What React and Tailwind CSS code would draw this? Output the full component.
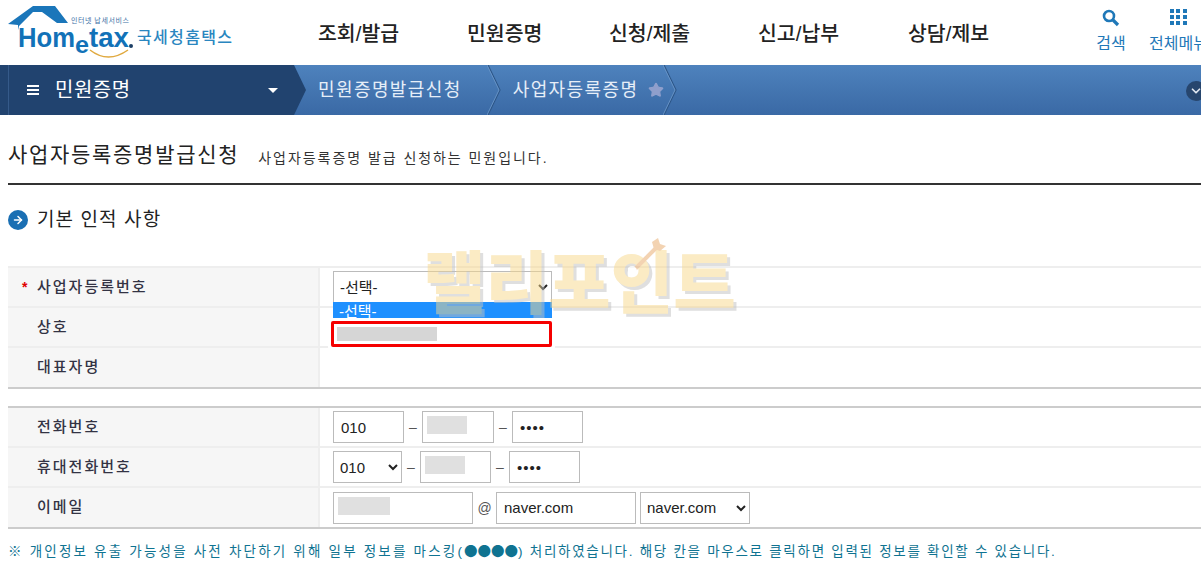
import React from "react";
import { Star, ChevronDown, ArrowRight } from "lucide-react";

const KR = "font-['Liberation_Sans','Noto_Sans_CJK_KR',sans-serif]";

const menus = [
    { label: "조회/발급", w: "w-[149px]" },
    { label: "민원증명", w: "w-[142px]" },
    { label: "신청/제출", w: "w-[149px]" },
    { label: "신고/납부", w: "w-[150px]" },
    { label: "상담/제보", w: "w-[120px]" },
];

const Logo = () => (
    <svg width="232" height="65" viewBox="0 0 232 65" className="shrink-0">
        <path d="M8 24 L33 6 L55 6 L68 23 L57 23 L42 12 L33 12 L19 26 L18 30 L18 25 Z" fill="#1a76ba" />
        <text x="71" y="23" fontSize="7" fill="#3d6fa6" fontFamily="Noto Sans CJK KR" textLength="58">인터넷 납세서비스</text>
        <text x="18" y="47" fontSize="28" fontWeight="700" fill="#1272b8" fontFamily="Liberation Sans" textLength="57" lengthAdjust="spacingAndGlyphs">Hom</text>
        <text x="75" y="53" fontSize="24" fontWeight="700" fill="#1272b8" fontFamily="Liberation Sans" textLength="14" lengthAdjust="spacingAndGlyphs">e</text>
        <text x="89" y="47" fontSize="27" fontWeight="700" fill="#1272b8" fontFamily="Liberation Sans" textLength="40" lengthAdjust="spacingAndGlyphs">tax</text>
        <circle cx="131" cy="46" r="2" fill="#1d3f66" />
        <path d="M90 50 Q108 64 128 50" fill="none" stroke="#e0a93f" strokeWidth="1.5" />
        <text x="137" y="43" fontSize="16" fontWeight="500" fill="#2a86c0" fontFamily="Noto Sans CJK KR" textLength="95">국세청홈택스</text>
    </svg>
);

const Chevron = ({ className }) => (
    <svg width="14" height="50" viewBox="0 0 14 50" className={className}>
        <path d="M1 0 L13 25 L1 50" fill="none" stroke="#2d5688" strokeWidth="1.2" />
        <path d="M0 0 L12 25 L0 50" fill="none" stroke="#6f9bcc" strokeWidth="0.8" />
    </svg>
);

const Row = ({ label, required, children, last }) => (
    <div className={`flex ${last ? "h-[39px]" : "h-10 border-b-2 border-[#eeeeee]"}`}>
        <div className="w-[312px] shrink-0 flex items-center pl-[14px] bg-[#f6f6f6] border-r-2 border-[#eeeeee]">
            <span className="w-[15px] text-[#e00000] text-sm leading-none font-bold">{required ? "*" : ""}</span>
            <span className="text-[15px] tracking-[2px] font-medium text-[#333344]">{label}</span>
        </div>
        <div className="flex-1 flex items-center pl-[13px]">{children}</div>
    </div>
);

const fieldCls = "h-8 border border-[#bbbbbb] bg-white text-[15px] text-[#222222] outline-none";

const Field = ({ w, value, mask, dots }) => (
    <div className={`relative ${w}`}>
        <input
            readOnly
            value={value || ""}
            className={`${fieldCls} w-full pl-[7px] ${dots ? "text-[13px] tracking-[1px]" : ""}`}
        />
        {mask && <div className={`absolute left-[5px] top-[5px] h-[18px] bg-[#e0e0e0] ${mask}`} />}
    </div>
);

const Pick = ({ w, value }) => (
    <select defaultValue={value} className={`${fieldCls} ${w} pl-[2px] border-[#aaaaaa]`}>
        <option>{value}</option>
    </select>
);

const Dash = ({ w }) => <span className={`${w} text-center text-sm text-[#555555]`}>–</span>;

const Watermark = () => (
    <div className="absolute left-[423px] top-[236px] pointer-events-none select-none opacity-50">
        <div className="text-[68px] font-black leading-[96px] text-[#f8d88a] [text-shadow:3px_3px_0_#c0c0c0]">
            랠리포인트
        </div>
        <svg width="40" height="40" viewBox="0 0 40 40" className="absolute left-[205px] top-[0px]">
            <path d="M4 36 L30 10" stroke="#e8a868" strokeWidth="4" />
            <path d="M24 6 L30 2 L32 8 L38 10 L32 15 L26 13 Z" fill="#e8a868" />
            <circle cx="4" cy="35" r="5" fill="#ffffff" />
        </svg>
    </div>
);

const App = () => (
    <div className={`relative w-[1201px] h-[567px] overflow-hidden bg-white ${KR}`}>
        <header className="h-[65px] flex items-center">
            <Logo />
            <nav className="flex shrink-0 ml-[86px] mt-[3px] text-[20.5px] font-medium text-[#222222]">
                {menus.map((m) => (
                    <span key={m.label} className={m.w}>{m.label}</span>
                ))}
            </nav>
            <div className="flex flex-col shrink-0 items-center ml-[61px] w-[44px] text-[#1f78b8] text-base">
                <svg width="18" height="18" viewBox="0 0 18 18">
                    <circle cx="7" cy="7" r="5" fill="none" stroke="#1f78b8" strokeWidth="2.6" />
                    <path d="M10.5 10.5 L16 16" stroke="#1f78b8" strokeWidth="3.2" />
                </svg>
                <span className="mt-[5px]">검색</span>
            </div>
            <div className="flex flex-col items-center ml-[16px] w-[59px] shrink-0 text-[#1f78b8] text-base whitespace-nowrap">
                <div className="grid grid-cols-3 gap-[2px] w-[17px]">
                    {Array.from({ length: 9 }).map((_, i) => (
                        <i key={i} className="w-[4px] h-[4px] bg-[#1f78b8]" />
                    ))}
                </div>
                <span className="mt-[7px]">전체메뉴</span>
            </div>
        </header>

        <div className="relative h-[50px] flex items-center bg-gradient-to-b from-[#4e82bd] to-[#3a69a5] text-white text-[18px] tracking-[1.4px]">
            <div className="h-full w-[306px] pl-2 bg-[#21436f] [clip-path:polygon(0_0,294px_0,306px_50%,294px_100%,0_100%)]">
                <div className="h-full flex items-center pl-[18px] border-l border-[#355a8a]">
                    <div className="flex flex-col gap-[2px] w-[12px]">
                        <i className="h-[2px] bg-white" />
                        <i className="h-[2px] bg-white" />
                        <i className="h-[2px] bg-white" />
                    </div>
                    <span className="ml-4 text-[20px] tracking-[0.5px]">민원증명</span>
                    <span className="ml-[137px] w-0 h-0 border-x-[5px] border-x-transparent border-t-[5px] border-t-white" />
                </div>
            </div>
            <span className="ml-[12px] text-[#e6eef8]">민원증명발급신청</span>
            <Chevron className="ml-[25px]" />
            <span className="ml-[12px] text-[#e6eef8]">사업자등록증명</span>
            <Star size={16} className="ml-[10px] text-[#8f9fcc] fill-[#8f9fcc]" />
            <Chevron className="-ml-[1px]" />
            <div className="absolute left-[1186px] top-[16px] w-5 h-5 rounded-full bg-[#27466e] flex items-center justify-center">
                <ChevronDown size={14} strokeWidth={3} className="text-[#dfe6ef]" />
            </div>
        </div>

        <div className="pl-2">
            <div className="h-[70px] flex items-center border-b-2 border-[#333333] pt-[11px]">
                <h1 className="text-[21px] tracking-[1.7px] font-normal text-[#222222]">사업자등록증명발급신청</h1>
                <p className="ml-[19px] mt-[6px] text-sm tracking-[1.95px] text-[#333333]">사업자등록증명 발급 신청하는 민원입니다.</p>
            </div>

            <div className="flex items-center h-[70px]">
                <div className="w-5 h-5 rounded-full bg-[#1a6fb3] flex items-center justify-center text-white">
                    <ArrowRight size={12} strokeWidth={3} />
                </div>
                <h2 className="ml-[9px] mt-[1px] text-[19px] tracking-[1.1px] font-normal text-[#222222]">기본 인적 사항</h2>
            </div>

            <div className="mt-[11px] border-t-2 border-[#eeeeee] border-b-2 border-b-[#cccccc]">
                <Row label="사업자등록번호" required>
                    <Pick w="w-[219px]" value="-선택-" />
                </Row>
                <Row label="상호" />
                <Row label="대표자명" last />
            </div>

            <div className="mt-[17px] border-t-2 border-[#cccccc] border-b-2 border-b-[#cccccc]">
                <Row label="전화번호">
                    <Field w="w-[71px]" value="010" />
                    <Dash w="w-[18px]" />
                    <Field w="w-[72px]" mask="w-[40px]" />
                    <Dash w="w-[18px]" />
                    <Field w="w-[71px]" value="••••" dots />
                </Row>
                <Row label="휴대전화번호">
                    <Pick w="w-[69px]" value="010" />
                    <Dash w="w-[18px]" />
                    <Field w="w-[71px]" mask="w-[40px]" />
                    <Dash w="w-[18px]" />
                    <Field w="w-[71px]" value="••••" dots />
                </Row>
                <Row label="이메일" last>
                    <Field w="w-[140px]" mask="w-[52px]" />
                    <span className="w-[23px] text-center text-sm text-[#555555]">@</span>
                    <Field w="w-[140px]" value="naver.com" />
                    <span className="w-1" />
                    <Pick w="w-[110px]" value="naver.com" />
                </Row>
            </div>

            <p className="mt-[11px] text-[13.5px] text-[#0f7391] whitespace-nowrap">
                <span className="tracking-[2.2px]">※ 개인정보 유출 가능성을 사전 차단하기 위해 일부 정보를 마스킹(</span>
                <span className="font-['Noto_Sans_CJK_KR'] tracking-[0px]">●●●●</span>
                <span className="tracking-[1.72px]">) 처리하였습니다. 해당 칸을 마우스로 클릭하면 입력된 정보를 확인할 수 있습니다.</span>
            </p>
        </div>

        <div className="absolute left-[333px] top-[302px] w-[219px] h-4 overflow-hidden bg-[#1e90ff] text-white text-[15px] leading-[20px] pl-[6px]">
            -선택-
        </div>
        <div className="absolute left-[328px] top-[318px] w-[227px] h-[32px] bg-white rounded-[3px] p-[3px]">
            <div className="h-full border-[3px] border-[#f50000] rounded-[2px] pl-[3px] pt-[3px] bg-white">
                <div className="w-[100px] h-[14px] bg-[#d6d6d6]" />
            </div>
        </div>
        <Watermark />
    </div>
);

export default App;
